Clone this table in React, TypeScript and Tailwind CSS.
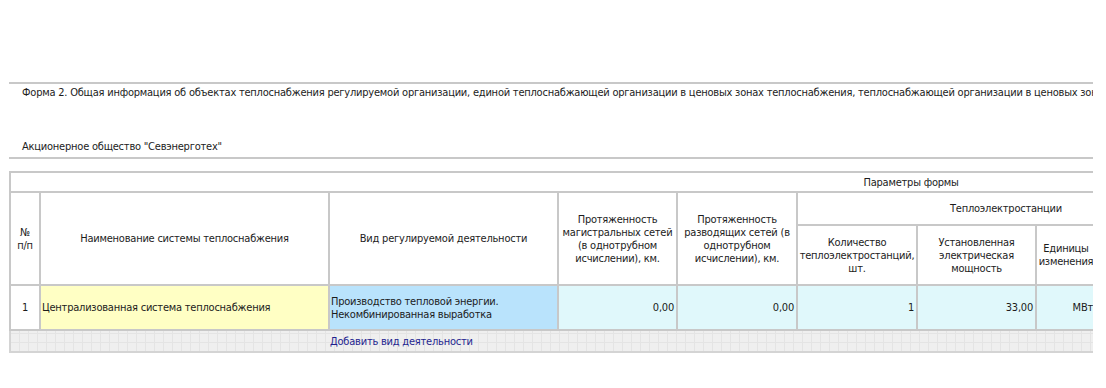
const cell = 'border-2 border-[#c8c8c8] align-middle'

export default function App() {
  return (
    <div className="min-h-[388px] bg-white pl-[9px] pt-[82px] font-['DejaVu_Sans_Condensed','DejaVu_Sans',sans-serif] text-[11px] leading-[13px] tracking-[-0.22px] text-[#1c1c1c]">
      <div className="w-[1084px] overflow-hidden">
        <div className="whitespace-nowrap border-t-2 border-[#c8c8c8] pl-[13px] pt-[2px]">
          Форма 2. Общая информация об объектах теплоснабжения регулируемой организации, единой теплоснабжающей организации в ценовых зонах теплоснабжения, теплоснабжающей организации в ценовых зонах теплоснабжения
        </div>
        <div className="mt-[41px] border-b-2 border-[#c8c8c8] pb-[4px] pl-[13px]">Акционерное общество "Севэнерготех"</div>

        <table className="mt-[12px] w-[1802px] table-fixed border-collapse">
          <colgroup>
            <col className="w-[30px]" />
            <col className="w-[289px]" />
            <col className="w-[229px]" />
            <col className="w-[119px]" />
            <col className="w-[120px]" />
            <col className="w-[120px]" />
            <col className="w-[119px]" />
            <col className="w-[60px]" />
            <col className="w-[119px]" />
            <col className="w-[200px]" />
            <col className="w-[200px]" />
            <col className="w-[197px]" />
          </colgroup>
          <thead>
            <tr className="h-[20px]">
              <th colSpan={12} className={`${cell} text-center font-normal`}>
                Параметры формы
              </th>
            </tr>
            <tr className="h-[33px]">
              <th rowSpan={2} className={`${cell} text-center font-normal`}>
                №<br />п/п
              </th>
              <th rowSpan={2} className={`${cell} text-center font-normal`}>Наименование системы теплоснабжения</th>
              <th rowSpan={2} className={`${cell} text-center font-normal`}>Вид регулируемой деятельности</th>
              <th rowSpan={2} className={`${cell} px-[1px] text-center font-normal`}>
                Протяженность магистральных сетей (в однотрубном исчислении), км.
              </th>
              <th rowSpan={2} className={`${cell} px-[1px] text-center font-normal`}>
                Протяженность разводящих сетей (в однотрубном исчислении), км.
              </th>
              <th colSpan={4} className={`${cell} text-center font-normal`}>Теплоэлектростанции</th>
              <th colSpan={3} className={`${cell} text-center font-normal`}>Котельные</th>
            </tr>
            <tr className="h-[60px]">
              <th className={`${cell} text-center font-normal`}>Количество теплоэлектростанций, шт.</th>
              <th className={`${cell} px-[2px] text-center font-normal`}>Установленная электрическая мощность</th>
              <th className={`${cell} text-center font-normal`}>Единицы изменения</th>
              <th className={`${cell} text-center font-normal`}>Установленная тепловая мощность</th>
              <th className={`${cell} text-center font-normal`}>Количество котельных, шт.</th>
              <th className={`${cell} text-center font-normal`}>Установленная тепловая мощность</th>
              <th className={`${cell} text-center font-normal`}>Единицы изменения</th>
            </tr>
          </thead>
          <tbody>
            <tr className="h-[45px]">
              <td className={`${cell} text-center`}>1</td>
              <td className={`${cell} bg-[#ffffc4] px-[1px]`}>Централизованная система теплоснабжения</td>
              <td className={`${cell} bg-[#b9e3fc] px-[1px]`}>
                Производство тепловой энергии.
                <br />
                Некомбинированная выработка
              </td>
              <td className={`${cell} bg-[#e0f8fb] pr-[2px] text-right`}>0,00</td>
              <td className={`${cell} bg-[#e0f8fb] pr-[2px] text-right`}>0,00</td>
              <td className={`${cell} bg-[#e0f8fb] pr-[2px] text-right`}>1</td>
              <td className={`${cell} bg-[#e0f8fb] pr-[2px] text-right`}>33,00</td>
              <td className={`${cell} bg-[#e0f8fb] pr-[2px] text-right`}>МВт</td>
              <td className={`${cell} bg-[#e0f8fb] pr-[2px] text-right`}>0,00</td>
              <td className={`${cell} bg-[#e0f8fb] pr-[2px] text-right`}>0</td>
              <td className={`${cell} bg-[#e0f8fb] pr-[2px] text-right`}>0,00</td>
              <td className={`${cell} bg-[#e0f8fb] pr-[2px] text-right`}>Гкал/ч</td>
            </tr>
            <tr className="h-[22px] bg-[#ededed] bg-[repeating-linear-gradient(90deg,#e4e4e4_0_1px,transparent_1px_9px),repeating-linear-gradient(0deg,#e4e4e4_0_1px,#efefef_1px_9px)]">
              <td colSpan={2} className="border-b-2 border-l-2 border-[#d4d4d4]" />
              <td colSpan={10} className="border-b-2 border-[#d4d4d4] pl-[1px] align-middle">
                <a href="#" className="text-[#1f1f8f]">
                  Добавить вид деятельности
                </a>
              </td>
            </tr>
          </tbody>
        </table>
      </div>
    </div>
  )
}
